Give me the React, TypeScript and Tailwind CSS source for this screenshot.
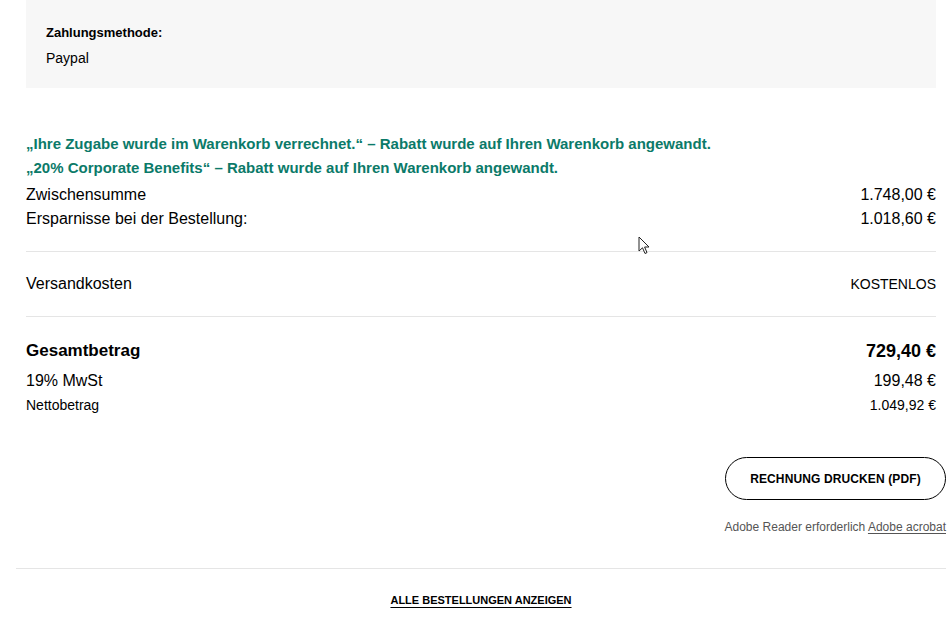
import React from "react";

export default function App() {
  const font = { fontFamily: '"Liberation Sans", Arial, sans-serif' };
  return (
    <div className="relative w-[951px] h-[625px] bg-white text-[#000] overflow-hidden" style={font}>
      <div className="w-[930px] ml-[16px]">
        <div className="mx-[10px]">
          <div className="bg-[#f7f7f7] h-[88px] pl-[20px] pt-[24px]">
            <div className="text-[13px] font-bold leading-[18px]">Zahlungsmethode:</div>
            <div className="text-[14px] leading-[18px] mt-[7px]">Paypal</div>
          </div>
          <div className="mt-[44px] text-[15px] font-bold leading-[24px] text-[#0b7a69]">
            <div>„Ihre Zugabe wurde im Warenkorb verrechnet.“ – Rabatt wurde auf Ihren Warenkorb angewandt.</div>
            <div>„20% Corporate Benefits“ – Rabatt wurde auf Ihren Warenkorb angewandt.</div>
          </div>
          <div className="mt-[3px] text-[16px] leading-[24px]">
            <div className="flex justify-between"><span>Zwischensumme</span><span>1.748,00 €</span></div>
            <div className="flex justify-between"><span>Ersparnisse bei der Bestellung:</span><span>1.018,60 €</span></div>
          </div>
          <div className="mt-[20px] border-t border-[#e5e5e5]" />
          <div className="h-[64px] flex items-center justify-between text-[16px]">
            <span>Versandkosten</span><span className="text-[14px]">KOSTENLOS</span>
          </div>
          <div className="border-t border-[#e5e5e5]" />
          <div className="mt-[22px] flex justify-between text-[17px] font-bold leading-[24px]">
            <span>Gesamtbetrag</span><span className="text-[18px]">729,40 €</span>
          </div>
          <div className="mt-[6px] flex justify-between text-[16px] leading-[24px]">
            <span>19% MwSt</span><span>199,48 €</span>
          </div>
          <div className="flex justify-between text-[14px] leading-[24px]">
            <span>Nettobetrag</span><span>1.049,92 €</span>
          </div>
        </div>
        <div className="mt-[40px] flex flex-col items-end">
          <button className="w-[221px] h-[43px] rounded-full border border-black text-[12px] font-bold tracking-[0.01em] bg-white">
            RECHNUNG DRUCKEN (PDF)
          </button>
          <div className="mt-[19px] text-[12px] text-[#555] leading-[16px]">
            Adobe Reader erforderlich <span className="underline underline-offset-2 text-[#555]">Adobe acrobat</span>
          </div>
        </div>
        <div className="mt-[33px] border-t border-[#e5e5e5]" />
        <div className="flex justify-center mt-[23px]">
          <span className="text-[11px] font-bold text-black underline underline-offset-[3px]">ALLE BESTELLUNGEN ANZEIGEN</span>
        </div>
      </div>
      <svg className="absolute left-[638px] top-[236px]" width="13" height="20" viewBox="0 0 13 20">
        <path d="M1 1 L1 15 L4.5 11.8 L7 17.5 L9 16.6 L6.6 11 L11 11 Z" fill="white" stroke="#222" strokeWidth="1" strokeLinejoin="round" />
      </svg>
    </div>
  );
}
